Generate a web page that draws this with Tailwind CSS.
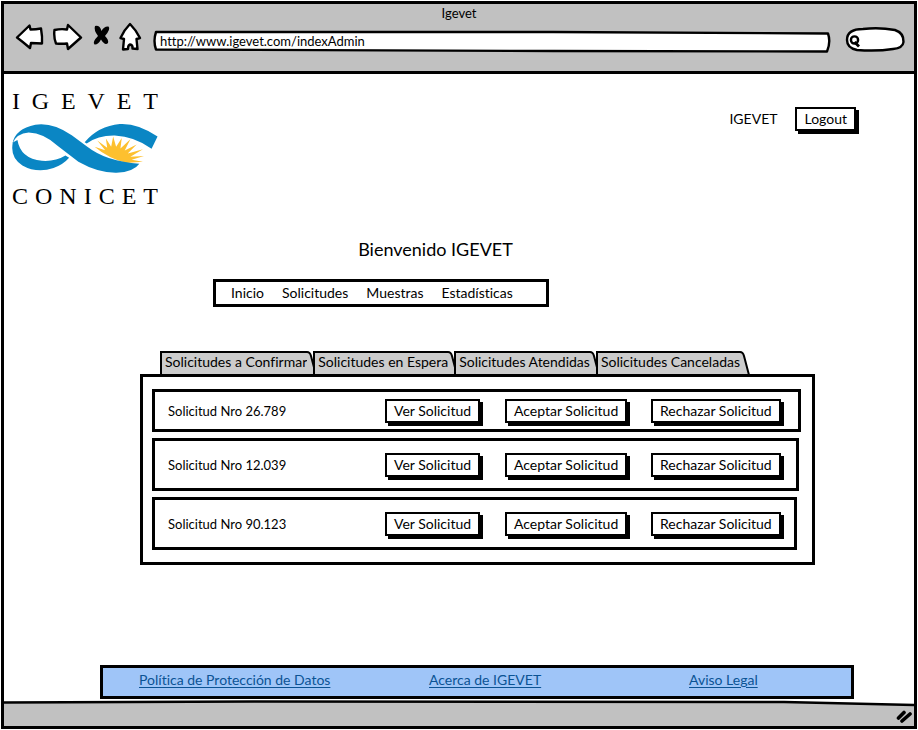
<!DOCTYPE html>
<html lang="es">
<head>
<meta charset="utf-8">
<meta name="viewport" content="width=device-width, initial-scale=1">
<title>Igevet</title>
<script src="https://cdn.jsdelivr.net/npm/@tailwindcss/browser@4"></script>
</head>
<body class="bg-white font-['Lato',sans-serif] text-[14px] leading-5 text-black [font-variant-ligatures:none]">
<div class="flex min-h-screen flex-col p-px">
  <div class="flex flex-1 flex-col border-[3px] border-black">

    <!-- Browser chrome -->
    <header class="border-b-[3px] border-black bg-[#c1c1c1] pb-[19px] text-[13px]">
      <div class="h-[18px] text-center leading-[18px]">Igevet</div>
      <div class="flex h-[30px] items-end gap-2 pr-[9px] pl-[11px]">
        <button type="button" aria-label="Atrás" class="shrink-0">
          <svg class="block h-[30px] w-[30px]" viewBox="0 0 30 30" fill="#fff" stroke="#000" stroke-width="2.4" stroke-linejoin="round"><path d="M2 15.500L14.500 3.500L15.500 7.500Q21 7.500 26 6.500Q27.500 15 27 21.500L16 21L15 26Q8 20 2 15.500Z"/></svg>
        </button>
        <button type="button" aria-label="Adelante" class="shrink-0">
          <svg class="block h-[30px] w-[30px]" viewBox="0 0 30 30" fill="#fff" stroke="#000" stroke-width="2.4" stroke-linejoin="round"><path d="M1.500 8Q8 6.500 14 7.500L15 3L28 15.500L15 27L14 21.500Q8 22 3 21.500Q0.500 15 1.500 8Z"/></svg>
        </button>
        <button type="button" aria-label="Detener" class="shrink-0">
          <svg class="block h-[30px] w-5" viewBox="0 0 20 30" fill="#000"><path d="M4 4Q9 3 10.500 9Q13 4 17.500 4.500Q20 7 14 14Q18 18 17 21Q14 24 10 17.500Q7 23 3.500 22.500Q1 20 7 14Q2.500 8 4 4Z"/></svg>
        </button>
        <button type="button" aria-label="Inicio del navegador" class="shrink-0">
          <svg class="block h-[30px] w-6" viewBox="0 0 24 30" fill="#fff" stroke="#000" stroke-width="2.4" stroke-linejoin="round"><path d="M11 2Q17 8 21 16L17.500 17L18.500 27L13.500 26.500Q14 23 11 22.500Q9 23 9 27L4 27.500L5 17L1.500 16Q5 8 11 2Z"/></svg>
        </button>
        <div class="relative ml-0.5 h-[21px] min-w-0 flex-1">
          <svg class="absolute inset-0 h-full w-full overflow-visible" viewBox="0 0 678 21" preserveAspectRatio="none" fill="#fff" stroke="#000" stroke-width="2.4" stroke-linejoin="round" aria-hidden="true"><path d="M3 1L400 1L675 2.500Q678 11 674 20.500L400 20L3 18.500Q0 10 3 1Z"/></svg>
          <input type="text" aria-label="Dirección" value="http://www.igevet.com/indexAdmin" class="relative block h-[19px] w-full bg-transparent pl-[7px] outline-none">
        </div>
        <div class="relative ml-[6px] h-[25px] w-[60px] shrink-0">
          <svg class="absolute inset-0 h-full w-full overflow-visible" viewBox="0 0 60 25" fill="#fff" stroke="#000" stroke-width="2.4" aria-hidden="true"><path d="M2 13Q2 2 18 2Q34 0 50 3Q59 6 58.500 15Q58 21 48 22Q32 24.500 12 23Q2 21 2 13Z"/><circle cx="9.500" cy="13" r="3.600"/><path d="M9.500 15L14 19.500" stroke-width="2.800"/></svg>
          <input type="search" aria-label="Buscar" class="relative block h-full w-full bg-transparent pr-2 pl-5 outline-none">
        </div>
      </div>
    </header>

    <main class="flex flex-1 flex-col">
      <div class="flex items-start justify-between pt-4 pr-[58px] pl-[6px]">
        <div class="w-[150px] font-['Liberation_Serif',serif] text-[24px] leading-[22px]">
          <div class="flex justify-between px-0.5"><span>I</span><span>G</span><span>E</span><span>V</span><span>E</span><span>T</span></div>
          <svg class="my-[10px] block h-[53px] w-[150px]" viewBox="30 130 450 160" aria-hidden="true">
            <path fill="#fdc02f" d="M284 205L316 215L292 186L322 208L318 180L334 205L340 174L349 205L366 178L362 210L392 182L375 216L411 198L384 225L430 212L392 235L433 233L396 244L430 250L380 254Q325 240 284 205Z"/>
            <g fill="#0a86c4">
              <path d="M36 195Q44 150 105 138Q158 130 215 170L262 205Q320 250 419 256Q402 281 350 283Q295 284 235 250L175 204Q130 163 85 162Q48 165 36 195Z"/>
              <path d="M37 192Q28 238 66 261Q110 286 160 269Q190 258 207 238L196 231Q165 250 125 247Q60 240 51 184Z"/>
              <path d="M254 191Q295 142 360 136Q415 133 474 174L456 211Q405 174 345 171Q295 170 260 195Z"/>
            </g>
          </svg>
          <div class="flex justify-between px-0.5"><span>C</span><span>O</span><span>N</span><span>I</span><span>C</span><span>E</span><span>T</span></div>
        </div>
        <div class="flex items-center gap-[18px] pt-[17px]">
          <span>IGEVET</span>
          <button type="button" class="h-6 border-2 border-black bg-white px-[7px] leading-5 shadow-[3px_3px_0_#000]">Logout</button>
        </div>
      </div>

      <h1 class="mt-[30px] mr-[47px] text-center text-[18px] leading-6">Bienvenido IGEVET</h1>

      <nav class="mt-[18px] ml-[209px] flex h-7 w-[336px] items-center gap-[18px] border-[3px] border-black pl-[15px]" aria-label="Principal">
        <a href="#inicio">Inicio</a>
        <a href="#solicitudes">Solicitudes</a>
        <a href="#muestras">Muestras</a>
        <a href="#estadisticas">Estadísticas</a>
      </nav>

      <section class="mt-11 mr-[99px] ml-[136px]">
        <div class="flex pl-5" role="tablist">
          <button type="button" role="tab" aria-selected="true" class="relative -mr-[3px] flex h-[23px]">
            <span class="h-full border-t-2 border-l-2 border-black bg-[#ccc] pl-[3px] leading-[18px]">Solicitudes a Confirmar</span>
            <svg class="block h-[23px] w-[9px] overflow-visible" viewBox="0 0 9 23" aria-hidden="true"><path d="M0 1Q3 1 4 5L9 23H0Z" fill="#ccc"/><path d="M0 1Q3 1 4 5L9 24" fill="none" stroke="#000" stroke-width="2"/></svg>
          </button>
          <button type="button" role="tab" aria-selected="false" class="relative -mr-[3px] flex h-[23px]">
            <span class="h-full border-t-2 border-l-2 border-black bg-[#ccc] pl-[3px] leading-[18px]">Solicitudes en Espera</span>
            <svg class="block h-[23px] w-[9px] overflow-visible" viewBox="0 0 9 23" aria-hidden="true"><path d="M0 1Q3 1 4 5L9 23H0Z" fill="#ccc"/><path d="M0 1Q3 1 4 5L9 24" fill="none" stroke="#000" stroke-width="2"/></svg>
          </button>
          <button type="button" role="tab" aria-selected="false" class="relative -mr-[3px] flex h-[23px]">
            <span class="h-full border-t-2 border-l-2 border-black bg-[#ccc] pl-[3px] leading-[18px]">Solicitudes Atendidas</span>
            <svg class="block h-[23px] w-[9px] overflow-visible" viewBox="0 0 9 23" aria-hidden="true"><path d="M0 1Q3 1 4 5L9 23H0Z" fill="#ccc"/><path d="M0 1Q3 1 4 5L9 24" fill="none" stroke="#000" stroke-width="2"/></svg>
          </button>
          <button type="button" role="tab" aria-selected="false" class="relative flex h-[23px]">
            <span class="h-full border-t-2 border-l-2 border-black bg-[#ccc] pl-[3px] leading-[18px]">Solicitudes Canceladas</span>
            <svg class="block h-[23px] w-[9px] overflow-visible" viewBox="0 0 9 23" aria-hidden="true"><path d="M0 1Q3 1 4 5L9 23H0Z" fill="#ccc"/><path d="M0 1Q3 1 4 5L9 24" fill="none" stroke="#000" stroke-width="2"/></svg>
          </button>
        </div>
        <ul class="flex flex-col gap-[6px] border-[3px] border-black pt-3 pr-[11px] pb-3 pl-[9px]" role="tabpanel">
          <li class="grid h-[43px] grid-cols-[217px_120px_146px_auto] items-center justify-items-start border-[3px] border-black pl-[13px]">
            <span class="text-[13px]">Solicitud Nro 26.789</span>
            <button type="button" class="h-6 border-2 border-black bg-white px-[7px] leading-5 shadow-[3px_3px_0_#000]">Ver Solicitud</button>
            <button type="button" class="h-6 border-2 border-black bg-white px-[7px] leading-5 shadow-[3px_3px_0_#000]">Aceptar Solicitud</button>
            <button type="button" class="h-6 border-2 border-black bg-white px-[7px] leading-5 shadow-[3px_3px_0_#000]">Rechazar Solicitud</button>
          </li>
          <li class="mr-0.5 grid h-[53px] grid-cols-[217px_120px_146px_auto] items-center justify-items-start border-[3px] border-black pl-[13px]">
            <span class="text-[13px]">Solicitud Nro 12.039</span>
            <button type="button" class="h-6 border-2 border-black bg-white px-[7px] leading-5 shadow-[3px_3px_0_#000]">Ver Solicitud</button>
            <button type="button" class="h-6 border-2 border-black bg-white px-[7px] leading-5 shadow-[3px_3px_0_#000]">Aceptar Solicitud</button>
            <button type="button" class="h-6 border-2 border-black bg-white px-[7px] leading-5 shadow-[3px_3px_0_#000]">Rechazar Solicitud</button>
          </li>
          <li class="mr-1 grid h-[53px] grid-cols-[217px_120px_146px_auto] items-center justify-items-start border-[3px] border-black pl-[13px]">
            <span class="text-[13px]">Solicitud Nro 90.123</span>
            <button type="button" class="h-6 border-2 border-black bg-white px-[7px] leading-5 shadow-[3px_3px_0_#000]">Ver Solicitud</button>
            <button type="button" class="h-6 border-2 border-black bg-white px-[7px] leading-5 shadow-[3px_3px_0_#000]">Aceptar Solicitud</button>
            <button type="button" class="h-6 border-2 border-black bg-white px-[7px] leading-5 shadow-[3px_3px_0_#000]">Rechazar Solicitud</button>
          </li>
        </ul>
      </section>

      <footer class="mt-auto mr-[60px] mb-px ml-24 grid h-[34px] grid-cols-[290px_260px_auto] border-[3px] border-black bg-[#9fc5f8] pt-0.5 pl-9 text-[#0b5394]">
        <a class="underline underline-offset-2" href="#politica">Política de Protección de Datos</a>
        <a class="underline underline-offset-2" href="#acerca">Acerca de IGEVET</a>
        <a class="underline underline-offset-2" href="#aviso">Aviso Legal</a>
      </footer>
    </main>

    <!-- Status bar -->
    <div class="relative flex h-[26px] items-end justify-end pb-[2px]">
      <svg class="absolute inset-0 h-full w-full" viewBox="0 0 910 26" preserveAspectRatio="none" aria-hidden="true"><path d="M0 2L250 1.500L780 2L910 5V26H0Z" fill="#c1c1c1"/><path d="M0 2.500L250 1.500L780 2L910 5" fill="none" stroke="#000" stroke-width="2.500"/></svg>
      <svg class="relative block h-4 w-[18px]" viewBox="0 0 18 16" stroke="#000" stroke-width="3.600" stroke-linecap="round" aria-hidden="true"><path d="M2.500 10L8 4.500M6 13L14 6"/></svg>
    </div>
  </div>
</div>
</body>
</html>
